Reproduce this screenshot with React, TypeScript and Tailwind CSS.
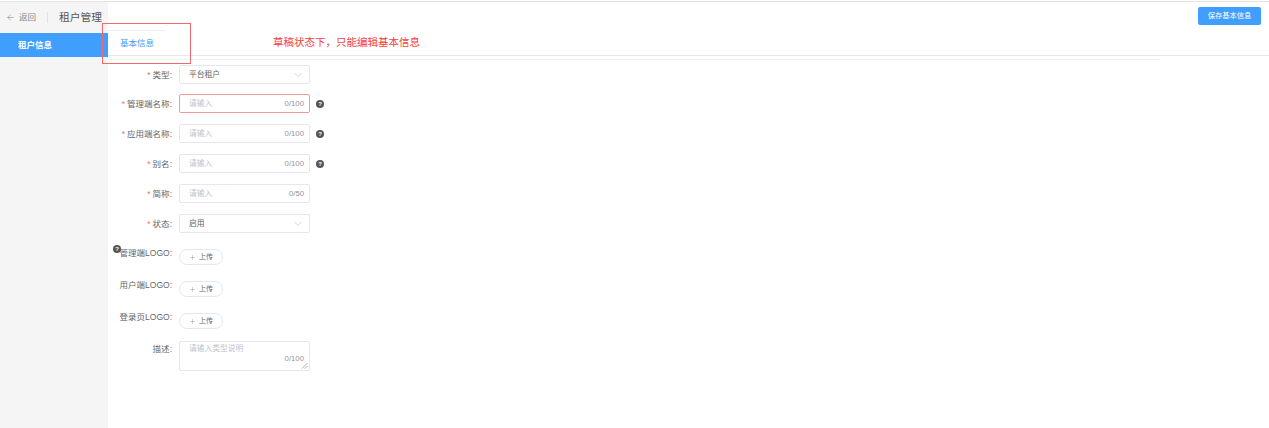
import React from 'react'
import { ArrowLeft, ChevronDown, Plus } from 'lucide-react'

const font = "font-['Liberation_Sans','Noto_Sans_CJK_SC',sans-serif]"

function Help({ className = '' }: { className?: string }) {
    return (
        <span className={`flex h-[8px] w-[8px] items-center justify-center rounded-full bg-[#555] text-[6px] font-bold leading-none text-white ${className}`}>
            ?
        </span>
    )
}

function Label({ text, required, className = '' }: { text: string; required?: boolean; className?: string }) {
    return (
        <div className={`flex w-[173px] shrink-0 justify-end pr-[1px] text-[8.5px] leading-[12px] text-[#666] ${className}`}>
            {required && <span className="mr-[2px] text-[#f56c6c]">*</span>}
            {text}:
        </div>
    )
}

function SelectRow({ label, value, className }: { label: string; value: string; className: string }) {
    return (
        <div className={`flex h-[19px] items-center ${className}`}>
            <Label text={label} required />
            <div className="ml-[6px] flex h-[19px] w-[131px] items-center justify-between rounded-[2px] border border-[#e4e7ed] pl-[9px] pr-[5px] text-[7.75px] text-[#606266]">
                {value}
                <ChevronDown size={12} strokeWidth={1} className="text-[#a3a8b0]" />
            </div>
        </div>
    )
}

function InputRow({ label, max, help, error, className }: { label: string; max: number; help?: boolean; error?: boolean; className: string }) {
    return (
        <div className={`flex h-[19px] items-center ${className}`}>
            <Label text={label} required />
            <div className={`ml-[6px] flex h-[19px] w-[131px] items-center justify-between rounded-[2px] border pl-[9px] pr-[5px] text-[7.75px] ${error ? 'border-[#f2999c]' : 'border-[#e4e7ed]'}`}>
                <span className="text-[#c0c4cc]">请输入</span>
                <span className="text-[#909399]">0/{max}</span>
            </div>
            {help && <Help className="ml-[6px]" />}
        </div>
    )
}

function UploadRow({ label, help, className }: { label: string; help?: boolean; className: string }) {
    return (
        <div className={`relative flex h-[18px] items-start ${className}`}>
            {help && <Help className="absolute left-[113px] top-[-2px]" />}
            <Label text={label} />
            <div className="ml-[6px] mt-[2px] flex h-[16px] w-[44px] items-center justify-center gap-[3px] rounded-full border border-[#e4e7ed] text-[7px] text-[#606266]">
                <Plus size={7} strokeWidth={1} />
                上传
            </div>
        </div>
    )
}

export default function App() {
    return (
        <div className={`relative flex h-[428px] w-[1269px] flex-col overflow-hidden bg-white pt-[1px] ${font}`}>
            <div className="h-[1px] shrink-0 bg-[#e3e3e3]" />
            <div className="flex min-h-0 flex-1">
                <div className="w-[108px] shrink-0 bg-[#f5f5f5]">
                    <div className="flex h-[31px] items-center pl-[6px]">
                        <ArrowLeft size={9} strokeWidth={1.25} className="text-[#666]" />
                        <span className="ml-[4px] text-[8.5px] text-[#888]">返回</span>
                        <span className="ml-[11px] h-[11px] w-[1px] bg-[#e2e2e2]" />
                        <span className="ml-[11px] whitespace-nowrap text-[10.75px] text-[#555]">租户管理</span>
                    </div>
                    <div className="flex h-[24px] items-center bg-[#409eff] pl-[18px] text-[8.5px] font-bold text-white">租户信息</div>
                </div>
                <div className="min-w-0 flex-1">
                    <div className="flex h-[53px] items-start justify-between pr-[8px]">
                        <div className="mt-[28px] flex h-[25px] w-[57px] items-center border-t border-[#eeeeee] pl-[12px] text-[8.5px] text-[#409eff]">基本信息</div>
                        <div className="mt-[5px] flex h-[18px] w-[63px] items-center justify-center rounded-[2px] bg-[#409eff] text-[7.25px] text-white">保存基本信息</div>
                    </div>
                    <div className="h-[1px] bg-[#e8e8e8]" />
                    <div className="mt-[3px] h-[1px] w-[1052px] bg-[#f2f2f2]" />
                    <div className="-ml-[108px]">
                        <SelectRow label="类型" value="平台租户" className="mt-[5px]" />
                        <InputRow label="管理端名称" max={100} help error className="mt-[10px]" />
                        <InputRow label="应用端名称" max={100} help className="mt-[11px]" />
                        <InputRow label="别名" max={100} help className="mt-[11px]" />
                        <InputRow label="简称" max={50} className="mt-[11px]" />
                        <SelectRow label="状态" value="启用" className="mt-[11px]" />
                        <UploadRow label="管理端LOGO" help className="mt-[14px]" />
                        <UploadRow label="用户端LOGO" className="mt-[14px]" />
                        <UploadRow label="登录页LOGO" className="mt-[14px]" />
                        <div className="mt-[12px] flex items-start">
                            <Label text="描述" className="pt-[2px]" />
                            <div className="relative ml-[6px] h-[30px] w-[131px] rounded-[2px] border border-[#e4e7ed] pl-[9px] pt-[1px] text-[7.75px] leading-[12px]">
                                <span className="text-[#c0c4cc]">请输入类型说明</span>
                                <span className="absolute bottom-[5px] right-[5px] text-[#909399]">0/100</span>
                                <svg width="7" height="7" viewBox="0 0 7 7" className="absolute bottom-[1px] right-[1px] text-[#888]">
                                    <path d="M1 6.5 6.5 1M4 6.5 6.5 4" stroke="currentColor" strokeWidth="0.7" fill="none" />
                                </svg>
                            </div>
                        </div>
                    </div>
                </div>
            </div>
            <div className="absolute left-[102px] top-[23px] h-[41px] w-[89px] border border-[#f0696c]" />
            <div className="absolute left-[273px] top-[35px] text-[10.5px] leading-[15px] text-[#f5403c]">草稿状态下，只能编辑基本信息</div>
        </div>
    )
}
